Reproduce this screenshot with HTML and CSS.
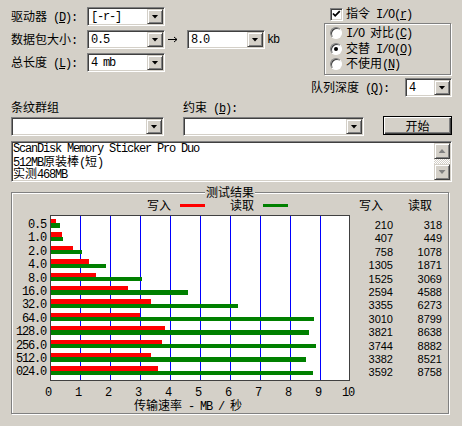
FILE: index.html
```html
<!DOCTYPE html>
<html><head><meta charset="utf-8"><link rel="stylesheet" href="styles.css"></head>
<body>
<div class="top">
  <div class="left">
    <div class="frow">
      <span class="lbl">驱动器<span class="m"> (<u>D</u>):</span></span>
      <div class="combo w78"><span class="cv m">[-r-]</span><span class="dd"></span></div>
    </div>
    <div class="frow">
      <span class="lbl">数据包大小<span class="m">:</span></span>
      <div class="combo w78"><span class="cv m">0.5</span><span class="dd"></span></div>
      <svg class="arrow" width="10" height="7" viewBox="0 0 10 7"><path d="M0 3.5H9M6 1L9 3.5L6 6" fill="none" stroke="#000" stroke-width="1"/></svg>
      <div class="combo w78"><span class="cv m">8.0</span><span class="dd"></span></div>
      <span class="kb m">kb</span>
    </div>
    <div class="frow">
      <span class="lbl">总长度<span class="m"> (<u>L</u>):</span></span>
      <div class="combo w78"><span class="cv m">4 mb</span><span class="dd"></span></div>
    </div>
  </div>
  <div class="right">
    <div class="chk"><span class="box"><svg width="9" height="9" viewBox="0 0 9 9"><polyline points="1,3.5 3.2,5.8 7.8,1.2" fill="none" stroke="#000" stroke-width="1.8"/></svg></span><span class="ct">指令<span class="m"> I/O(<u>r</u>)</span></span></div>
    <div class="rframe">
      <div class="radio"><span class="rb"></span><span class="rt"><span class="m">I/O </span>对比<span class="m">(<u>C</u>)</span></span></div>
      <div class="radio mid"><span class="rb on"></span><span class="rt">交替<span class="m"> I/O(<u>O</u>)</span></span></div>
      <div class="radio"><span class="rb"></span><span class="rt">不使用<span class="m">(<u>N</u>)</span></span></div>
    </div>
    <div class="qrow">
      <span class="ql">队列深度<span class="m"> (<u>Q</u>):</span></span>
      <div class="combo w47"><span class="cv m">4</span><span class="dd"></span></div>
    </div>
  </div>
</div>

<div class="row4">
  <div class="col c1">
    <div class="flbl">条纹群组</div>
    <div class="combo"><span class="cv"></span><span class="dd"></span></div>
  </div>
  <div class="col c2">
    <div class="flbl">约束<span class="m"> (<u>b</u>):</span></div>
    <div class="combo"><span class="cv"></span><span class="dd"></span></div>
  </div>
  <div class="btn">开始</div>
</div>

<div class="memo">
  <div class="txt">
    <div class="m">ScanDisk Memory Sticker Pro Duo</div>
    <div><span class="m">512MB</span>原装棒<span class="m">(</span>短<span class="m">)</span></div>
    <div>实测<span class="m">468MB</span></div>
  </div>
  <div class="sb">
    <div class="sbtn"><span class="tri up"></span></div>
    <div class="track"></div>
    <div class="sbtn"><span class="tri"></span></div>
  </div>
</div>

<div class="group">
  <span class="gtitle">测试结果</span>
  <div class="legend">
    <span>写入</span><span class="lline red"></span>
    <span class="lg2">读取</span><span class="lline green"></span>
    <span class="h1">写入</span><span class="h2">读取</span>
  </div>
  <div class="chart">
    <div class="ylabels m">
      <div class="yl">0.5</div><div class="yl">1.0</div><div class="yl">2.0</div><div class="yl">4.0</div>
      <div class="yl">8.0</div><div class="yl">16.0</div><div class="yl">32.0</div><div class="yl">64.0</div>
      <div class="yl">128.0</div><div class="yl">256.0</div><div class="yl">512.0</div><div class="yl">024.0</div>
    </div>
    <div class="plot">
      <div class="brow"><div class="bw" style="width:5.3px"></div><div class="br" style="width:8.54px"></div></div>
      <div class="brow"><div class="bw" style="width:11.21px"></div><div class="br" style="width:12.47px"></div></div>
      <div class="brow"><div class="bw" style="width:21.74px"></div><div class="br" style="width:31.34px"></div></div>
      <div class="brow"><div class="bw" style="width:38.15px"></div><div class="br" style="width:55.13px"></div></div>
      <div class="brow"><div class="bw" style="width:44.75px"></div><div class="br" style="width:91.07px"></div></div>
      <div class="brow"><div class="bw" style="width:76.82px"></div><div class="br" style="width:136.64px"></div></div>
      <div class="brow"><div class="bw" style="width:99.65px"></div><div class="br" style="width:187.19px"></div></div>
      <div class="brow"><div class="bw" style="width:89.3px"></div><div class="br" style="width:262.97px"></div></div>
      <div class="brow"><div class="bw" style="width:113.63px"></div><div class="br" style="width:258.14px"></div></div>
      <div class="brow"><div class="bw" style="width:111.32px"></div><div class="br" style="width:265.46px"></div></div>
      <div class="brow"><div class="bw" style="width:100.46px"></div><div class="br" style="width:254.63px"></div></div>
      <div class="brow"><div class="bw" style="width:106.76px"></div><div class="br" style="width:261.74px"></div></div>
    </div>
    <div class="vcol wcol">
      <div class="v">210</div><div class="v">407</div><div class="v">758</div><div class="v">1305</div>
      <div class="v">1525</div><div class="v">2594</div><div class="v">3355</div><div class="v">3010</div>
      <div class="v">3821</div><div class="v">3744</div><div class="v">3382</div><div class="v">3592</div>
    </div>
    <div class="vcol rcol">
      <div class="v">318</div><div class="v">449</div><div class="v">1078</div><div class="v">1871</div>
      <div class="v">3069</div><div class="v">4588</div><div class="v">6273</div><div class="v">8799</div>
      <div class="v">8638</div><div class="v">8882</div><div class="v">8521</div><div class="v">8758</div>
    </div>
  </div>
  <div class="xlabels m">
    <span>0</span><span>1</span><span>2</span><span>3</span><span>4</span><span>5</span><span>6</span><span>7</span><span>8</span><span>9</span><span>10</span>
  </div>
  <div class="xtitle">传输速率<span class="m"> - MB / </span>秒</div>
</div>
</body></html>
```

FILE: styles.css
```css
* { box-sizing: border-box; margin: 0; padding: 0; }
html, body { background: #d4d0c8; }
body {
  width: 462px; height: 426px; overflow: hidden;
  font-family: "Noto Sans CJK SC", sans-serif;
  font-size: 12px; line-height: 12px; color: #000;
}
.m { font-family: "Liberation Mono", "Noto Sans CJK SC", monospace; letter-spacing: -1.2px; }
u { text-decoration: underline; text-underline-offset: 1px; }

/* 3D helpers */
.combo {
  display: flex; align-items: center; height: 19px; background: #fff;
  border: 1px solid; border-color: #808080 #fff #fff #808080;
  box-shadow: inset 1px 1px 0 #404040, inset -1px -1px 0 #d4d0c8;
  padding: 1px;
}
.combo .cv { flex: 1; padding-left: 2px; white-space: nowrap; }
.dd {
  width: 16px; height: 15px; background: #d4d0c8; flex: none;
  border: 1px solid; border-color: #d4d0c8 #404040 #404040 #d4d0c8;
  box-shadow: inset 1px 1px 0 #fff, inset -1px -1px 0 #808080;
  display: flex; align-items: center; justify-content: center;
}
.dd::after {
  content: ""; width: 7px; height: 4px; background: #000;
  clip-path: polygon(0 0, 100% 0, 50% 100%);
}
.w78 { width: 78px; }
.w47 { width: 47px; }

/* top */
.top { display: flex; }
.left { padding: 7px 0 0 11px; display: flex; flex-direction: column; gap: 4px; }
.frow { display: flex; align-items: center; height: 19px; }
.lbl { width: 76px; white-space: nowrap; }
.arrow { margin: 0 9px 0 3px; display: block; }
.kb { margin-left: 2px; }

.right { margin-left: auto; margin-right: 10px; width: 147px; padding-top: 7px; }
.chk { display: flex; align-items: center; height: 14px; margin-left: 25px; }
.box {
  width: 13px; height: 13px; background: #fff; display: flex; align-items: center; justify-content: center;
  border: 1px solid; border-color: #808080 #fff #fff #808080;
  box-shadow: inset 1px 1px 0 #404040, inset -1px -1px 0 #d4d0c8;
}
.box svg { display: block; }
.ct { margin-left: 3px; }
.rframe {
  margin: 2px 0 0 19px; width: 127px; height: 52px; padding: 1px 0 0 5px;
  border: 1px solid #808080; box-shadow: inset 1px 1px 0 #fff, 1px 1px 0 #fff;
}
.radio { display: flex; align-items: center; height: 16px; }
.radio.mid { height: 15px; }
.rb {
  width: 12px; height: 12px; border-radius: 50%; background: #fff; flex: none;
  border: 1px solid; border-color: #808080 #fff #fff #808080;
  box-shadow: inset 1px 1px 0 #404040;
  display: flex; align-items: center; justify-content: center;
}
.rb.on::after { content: ""; width: 4px; height: 4px; border-radius: 50%; background: #000; }
.rt { margin-left: 4px; white-space: nowrap; }
.qrow { display: flex; align-items: center; height: 19px; margin-top: 3px; }
.ql { margin-left: 6px; white-space: nowrap; }
.qrow .combo { margin-left: auto; }

/* row 4 */
.row4 { display: flex; padding-left: 11px; margin-top: 3px; }
.col .flbl { height: 17px; line-height: 14px; white-space: nowrap; }
.c1 { width: 153px; }
.c2 { width: 181px; margin-left: 19px; }
.btn {
  margin: 16px 0 0 19px; width: 69px; height: 19px;
  border: 1px solid #000; background: #d4d0c8;
  box-shadow: inset 1px 1px 0 #fff, inset -1px -1px 0 #404040, inset -2px -2px 0 #808080;
  display: flex; align-items: center; justify-content: center;
}

/* memo */
.memo {
  margin: 5px 0 0 11px; width: 441px; height: 41px; background: #fff; display: flex;
  border: 1px solid; border-color: #808080 #fff #fff #808080;
  box-shadow: inset 1px 1px 0 #404040, inset -1px -1px 0 #d4d0c8;
  padding: 1px;
}
.txt { flex: 1; padding-top: 0; }
.txt div { height: 12px; line-height: 12px; white-space: nowrap; }
.sb { width: 16px; display: flex; flex-direction: column; }
.sbtn {
  width: 16px; height: 16px; background: #d4d0c8; flex: none;
  border: 1px solid; border-color: #d4d0c8 #404040 #404040 #d4d0c8;
  box-shadow: inset 1px 1px 0 #fff, inset -1px -1px 0 #808080;
  display: flex; align-items: center; justify-content: center;
}
.track {
  flex: 1;
  background: repeating-conic-gradient(#fff 0 25%, #d4d0c8 0 50%) 0 0 / 2px 2px;
}
.tri { width: 7px; height: 4px; background: #808080; clip-path: polygon(0 0, 100% 0, 50% 100%); }
.tri.up { clip-path: polygon(50% 0, 100% 100%, 0 100%); }

/* group */
.group {
  position: relative;
  margin: 10px 0 0 11px; width: 438px; height: 222px;
  border: 1px solid #808080; box-shadow: inset 1px 1px 0 #fff, 1px 1px 0 #fff;
  padding-top: 6px;
}
.gtitle {
  position: absolute; top: -7px; left: 193px; padding: 0 1px;
  background: #d4d0c8; line-height: 12px;
}
.legend { display: flex; align-items: center; height: 12px; padding-left: 135px; margin-bottom: 4px; }
.lline { width: 25px; height: 3px; margin-left: 9px; }
.red { background: #ff0000; }
.green { background: #008000; }
.lg2 { margin-left: 25px; }
.h1 { margin-left: 71px; }
.h2 { margin-left: 25px; }

.chart { display: flex; height: 166px; }
.ylabels { width: 38px; padding: 6px 4px 0 0; }
.yl { height: 13.4px; line-height: 9px; text-align: right; }
.plot {
  width: 300px; border: 1px solid #404040; padding-top: 3px;
  background: repeating-linear-gradient(to right, #fff 0 29px, #0000ff 29px 30px);
}
.brow { height: 13.4px; }
.bw { height: 4.35px; background: #ff0000; }
.br { height: 4.35px; background: #008000; }
.vcol { padding-top: 6px; font-family: "Liberation Sans", sans-serif; font-size: 11px; }
.wcol { width: 43px; }
.rcol { width: 49px; }
.v { height: 13.4px; line-height: 9px; text-align: right; }

.xlabels { display: flex; padding-left: 21px; margin-top: 6px; height: 12px; }
.xlabels span { width: 30px; text-align: center; }
.xtitle { padding-left: 122px; height: 12px; white-space: nowrap; }
```
